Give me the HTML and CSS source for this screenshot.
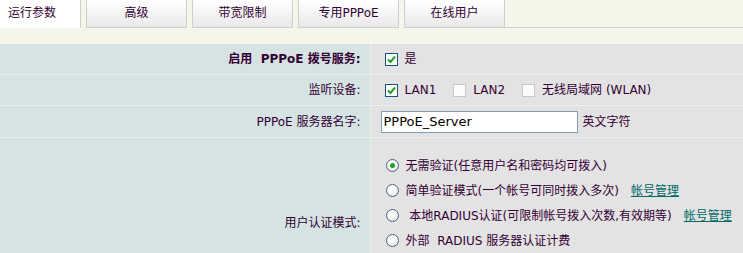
FILE: index.html
```html
<!DOCTYPE html>
<html lang="zh-CN">
  <head>
    <meta charset="UTF-8" />
    <title>PPPoE 服务器</title>
    <link rel="stylesheet" href="styles.css">
  </head>
  <body>
    <!-- 탭 -->
    <ul class="tabs">
      <li class="tab tab-active">运行参数</li>
      <li class="tab">高级</li>
      <li class="tab">带宽限制</li>
      <li class="tab">专用PPPoE</li>
      <li class="tab">在线用户</li>
      <li class="tab-rest"></li>
    </ul>

    <table class="form">
      <tr class="row-1">
        <td class="label label-bold">启用&nbsp; PPPoE 拨号服务:</td>
        <td class="field">
          <div class="line">
            <span class="box box-on"><svg viewBox="0 0 11 11"><path d="M2 5.5 L4.5 8 L9 2.5" /></svg></span>
            <span>是</span>
          </div>
        </td>
      </tr>
      <tr class="row-2">
        <td class="label">监听设备:</td>
        <td class="field">
          <div class="line">
            <span class="box box-on"><svg viewBox="0 0 11 11"><path d="M2 5.5 L4.5 8 L9 2.5" /></svg></span>
            <span class="opt">LAN1</span>
            <span class="box"></span>
            <span class="opt">LAN2</span>
            <span class="box"></span>
            <span>无线局域网 (WLAN)</span>
          </div>
        </td>
      </tr>
      <tr class="row-3">
        <td class="label">PPPoE 服务器名字:</td>
        <td class="field">
          <div class="line">
            <input type="text" class="name-input" value="PPPoE_Server" />
            <span>英文字符</span>
          </div>
        </td>
      </tr>
      <tr class="row-4">
        <td class="label">用户认证模式:</td>
        <td class="field field-radios">
          <div class="radio-line">
            <span class="radio radio-on"></span>
            <span>无需验证(任意用户名和密码均可拨入)</span>
          </div>
          <div class="radio-line">
            <span class="radio"></span>
            <span>简单验证模式(一个帐号可同时拨入多次)</span>
            <a class="link" href="#">帐号管理</a>
          </div>
          <div class="radio-line">
            <span class="radio"></span>
            <span>&nbsp;本地RADIUS认证(可限制帐号拨入次数,有效期等)</span>
            <a class="link" href="#">帐号管理</a>
          </div>
          <div class="radio-line">
            <span class="radio"></span>
            <span>外部&nbsp; RADIUS 服务器认证计费</span>
          </div>
        </td>
      </tr>
    </table>
  </body>
</html>
```

FILE: styles.css
```css
html, body{
  margin:0;
  padding:0;
}

body{
  background:#f5f5e9;
  color:#330033;
  font-family:"DejaVu Sans", "Noto Sans CJK SC", sans-serif;
  font-size:12px;
  line-height:1;
}

/* tabs */
.tabs{
  list-style:none;
  margin:0;
  padding:0;
  display:flex;
  height:28px;
}

.tab{
  box-sizing:border-box;
  height:28px;
  width:101px;
  margin-right:5px;
  border:1px solid #cfcfcf;
  border-top:0;
  background:linear-gradient(#ffffff, #e9e9e9);
  display:flex;
  align-items:center;
  justify-content:center;
  padding-bottom:2px;
}

.tab-active{
  width:81px;
  border-left:0;
  border-bottom:0;
  background:#ffffff;
  justify-content:flex-start;
  padding-left:8px;
}

.tab-rest{
  flex:1;
  margin-left:-5px;
  border-bottom:1px solid #cfcfcf;
}

/* form table */
.form{
  margin-top:16px;
  width:100%;
  border-collapse:collapse;
}

.form td{
  padding:0;
  border-bottom:1px solid #eeeeee;
}

.label{
  width:370px;
  background:#d5e3e3;
  border-right:1px solid #eeeeee;
  text-align:right;
  padding-right:9px !important;
  box-sizing:border-box;
}

.label-bold{
  font-weight:bold;
}

.field{
  background:#e3e3e3;
  padding-left:14px !important;
}

.row-1 td{ height:30px; }
.row-2 td{ height:30px; }
.row-3 td{ height:31px; }
.row-4 td{ height:154px; }

.line{
  display:flex;
  align-items:center;
}

.box{
  box-sizing:border-box;
  width:13px;
  height:13px;
  border:1px solid #c9c9c0;
  background:#fbfbfb;
  margin-right:7px;
  display:inline-flex;
}

.box-on{
  border-color:#1c5180;
  background:#ffffff;
}

.box svg{
  width:11px;
  height:11px;
  fill:none;
  stroke:#21a121;
  stroke-width:2;
}

.opt{
  margin-right:17px;
}

.name-input{
  box-sizing:border-box;
  width:197px;
  height:22px;
  margin:0 5px 0 -4px;
  padding:1px 2px;
  border:1px solid #7f9db9;
  background:#ffffff;
  color:#000000;
  font-family:"DejaVu Sans", sans-serif;
  font-size:13px;
  outline:none;
}

.field-radios{
  vertical-align:top;
  padding-top:15px !important;
}

.radio-line{
  height:25px;
  display:flex;
  align-items:center;
}

.radio{
  box-sizing:border-box;
  width:13px;
  height:13px;
  margin:0 7px 0 1px;
  border:1px solid #4f6384;
  border-radius:50%;
  background:radial-gradient(circle at 40% 35%, #ffffff 30%, #d6d6d6);
  display:inline-flex;
  align-items:center;
  justify-content:center;
}

.radio-on::after{
  content:"";
  width:5px;
  height:5px;
  border-radius:50%;
  background:#22a022;
}

.link{
  color:#006a6a;
  text-decoration:underline;
  margin-left:12px;
}
```
